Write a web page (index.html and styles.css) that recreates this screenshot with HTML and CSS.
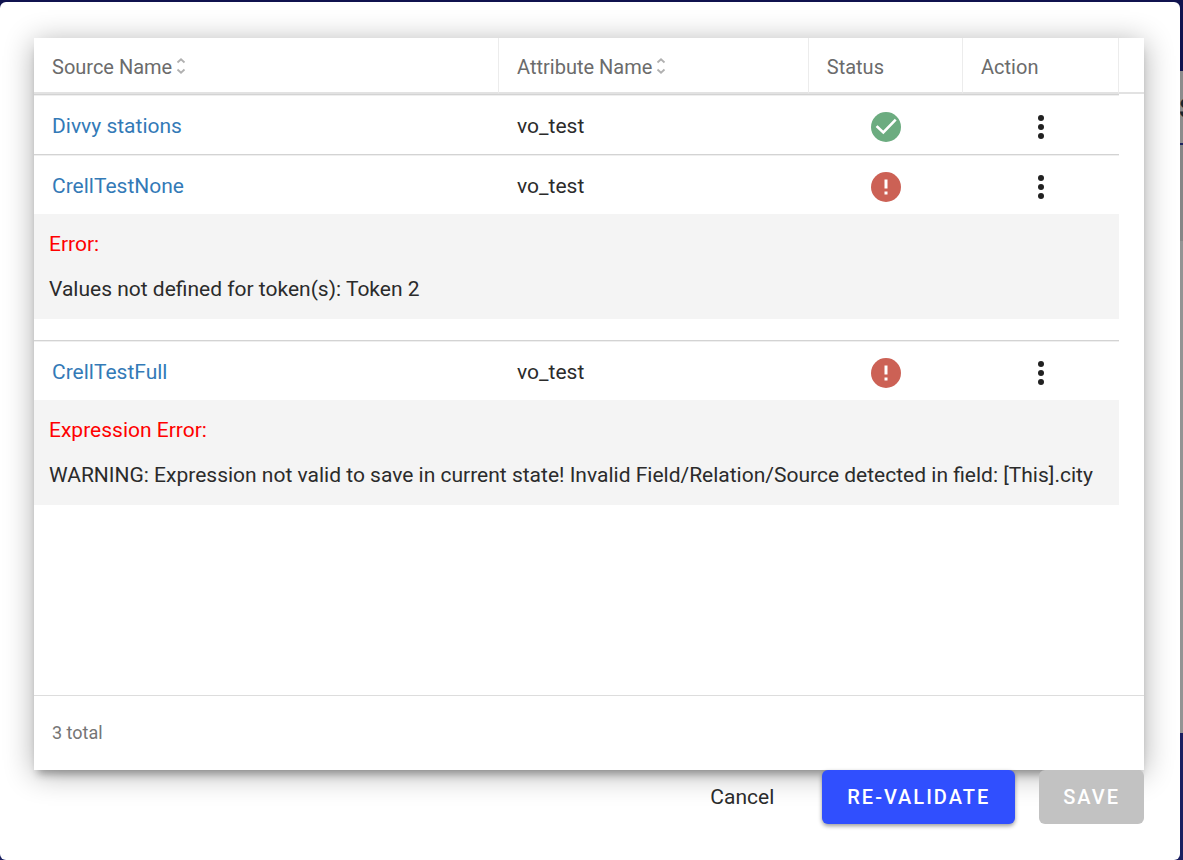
FILE: index.html
```html
<!DOCTYPE html>
<html lang="en">
<head>
<meta charset="utf-8">
<title>Validate sources</title>
<link rel="stylesheet" href="styles.css">
</head>
<body>
<svg class="sprite" aria-hidden="true">
  <symbol id="sort" viewBox="0 0 10 16"><path d="M1.500 4.500 5 1.300l3.500 3.200M1.500 11.500 5 14.700l3.500-3.200" fill="none" stroke="#b0b0b0" stroke-width="1.800"/></symbol>
  <symbol id="ok" viewBox="0 0 30 30"><circle cx="15" cy="15" r="15" fill="#6cac80"/><path d="M6.500 15 12.300 20.500 23.800 8.600" fill="none" stroke="#fff" stroke-width="2.600" stroke-linecap="square"/></symbol>
  <symbol id="bad" viewBox="0 0 30 30"><circle cx="15" cy="15" r="15" fill="#cc6155"/><path d="M13.500 7.500h3v9h-3zM13.500 19.500h3v3h-3z" fill="#fff"/></symbol>
  <symbol id="dots" viewBox="0 0 6 24"><g fill="#212121"><circle cx="3" cy="3" r="3"/><circle cx="3" cy="12" r="3"/><circle cx="3" cy="21" r="3"/></g></symbol>
</svg>
<div class="stage">
  <div class="backdrop" aria-hidden="true">
    <div class="backdrop-bar"></div>
    <div class="backdrop-title"><span>S</span></div>
    <div class="backdrop-tools"></div>
    <div class="backdrop-body"></div>
    <div class="backdrop-foot"></div>
  </div>
  <main class="dialog" role="dialog" aria-label="Source validation">
    <section class="card">
      <div class="card-body">
        <table class="grid">
          <colgroup><col class="c-source"><col class="c-attr"><col class="c-status"><col class="c-action"><col class="c-gutter"></colgroup>
          <thead>
            <tr>
              <th scope="col">Source Name<svg class="sort"><use href="#sort"/></svg></th>
              <th scope="col">Attribute Name<svg class="sort"><use href="#sort"/></svg></th>
              <th scope="col">Status</th>
              <th scope="col">Action</th>
              <td class="gutter"></td>
            </tr>
          </thead>
          <tbody>
            <tr class="row">
              <td><a href="#divvy">Divvy stations</a></td>
              <td>vo_test</td>
              <td class="center"><svg class="status" role="img" aria-label="Valid"><use href="#ok"/></svg></td>
              <td class="center"><button class="more" type="button" aria-label="Actions"><svg><use href="#dots"/></svg></button></td>
              <td class="gutter"></td>
            </tr>
            <tr class="row">
              <td><a href="#none">CrellTestNone</a></td>
              <td>vo_test</td>
              <td class="center"><svg class="status" role="img" aria-label="Invalid"><use href="#bad"/></svg></td>
              <td class="center"><button class="more" type="button" aria-label="Actions"><svg><use href="#dots"/></svg></button></td>
              <td class="gutter"></td>
            </tr>
            <tr class="detail">
              <td colspan="4"><div class="message"><p class="error">Error:</p><p>Values not defined for token(s): Token 2</p></div></td>
              <td class="gutter"></td>
            </tr>
            <tr class="row">
              <td><a href="#full">CrellTestFull</a></td>
              <td>vo_test</td>
              <td class="center"><svg class="status" role="img" aria-label="Invalid"><use href="#bad"/></svg></td>
              <td class="center"><button class="more" type="button" aria-label="Actions"><svg><use href="#dots"/></svg></button></td>
              <td class="gutter"></td>
            </tr>
            <tr class="detail">
              <td colspan="4"><div class="message"><p class="error">Expression Error:</p><p>WARNING: Expression not valid to save in current state! Invalid Field/Relation/Source detected in field: [This].city</p></div></td>
              <td class="gutter"></td>
            </tr>
          </tbody>
        </table>
      </div>
      <footer class="card-foot">3 total</footer>
    </section>
    <div class="actions">
      <button class="btn cancel" type="button">Cancel</button>
      <button class="btn primary" type="button">RE-VALIDATE</button>
      <button class="btn save" type="button" disabled>SAVE</button>
    </div>
  </main>
</div>
</body>
</html>
```
FILE: styles.css
```css
* { box-sizing: border-box; }
body {
  margin: 0;
  background: #10134f;
  color: #2b2b2b;
  font-family: Roboto, "Liberation Sans", sans-serif;
  font-size: 21px;
  line-height: 24px;
}
p { margin: 0; }
.sprite { display: none; }
.stage { display: grid; min-height: 100vh; }
.backdrop, .dialog { grid-area: 1 / 1; min-width: 0; }
.backdrop { display: flex; flex-direction: column; background: #949494; }
.backdrop-bar { height: 71px; background: #10134f; }
.backdrop-title {
  display: flex;
  height: 74px;
  padding-top: 24px;
  justify-content: flex-end;
  background: #8c8c8c;
  border-bottom: 2px solid #1c2460;
  color: #17242f;
  font-weight: 700;
}
.backdrop-title span { width: 4px; overflow: hidden; font-size: 28px; line-height: 28px; }
.backdrop-tools { height: 96px; background: #868686; }
.backdrop-body { flex: 1; border-top: 54px solid #949494; }
.backdrop-foot { height: 127px; background: #1a1f60; }
.dialog {
  display: flex;
  flex-direction: column;
  margin: 2px 3px 0 0;
  padding: 36px;
  padding-left: 34px;
  background: #fff;
  border-radius: 6px;
}
.card {
  display: flex;
  flex: 1;
  flex-direction: column;
  background: #fff;
  box-shadow: 0 8px 8px -4px rgba(0, 0, 0, .3), 0 4px 28px rgba(0, 0, 0, .32);
}
.card-body { flex: 1; }
.grid { width: 100%; table-layout: fixed; border-spacing: 0; }
.c-source { width: 41.900%; }
.c-attr { width: 27.900%; }
.c-status { width: 13.900%; }
.c-gutter { width: 25px; }
.grid td, .grid th { padding: 0 18px; text-align: left; font-weight: 400; }
.grid thead th, .grid thead td { height: 56px; border-bottom: 2px solid #e2e2e2; }
.grid th { color: #6b6b6b; border-right: 1px solid #ececec; padding-top: 4px; font-size: 20px; }
.grid .gutter { padding: 0; }
.sort { width: 10px; height: 16px; margin-left: 4px; }
.row td { height: 60px; padding-top: 2px; }
.row td:not(.gutter) { border-top: 1px solid #d3d3d3; box-shadow: inset 0 1px #efefef; }
.grid .center { text-align: center; padding-top: 4px; }
.grid a { color: #337ab7; text-decoration: none; }
.status { display: block; width: 30px; height: 30px; margin: 0 auto; }
.more { display: block; margin: 0 auto; padding: 3px 12px; border: 0; background: none; }
.more svg { display: block; width: 6px; height: 24px; }
.grid .detail td { padding: 0 0 21px; }
.message { display: grid; gap: 21px; padding: 18px 15px; background: #f4f4f4; }
.error { color: #f00; }
.card-foot { padding: 25px 18px; border-top: 1px solid #ddd; color: #757575; font-size: 18px; }
.actions { display: flex; justify-content: flex-end; gap: 24px; }
.btn {
  height: 54px;
  padding: 0 24px;
  border: 0;
  border-radius: 6px;
  font: inherit;
  color: #fff;
}
.cancel { background: none; color: #2b2b2b; }
.primary, .save { font-size: 20px; font-weight: 500; letter-spacing: 2px; }
.primary { padding: 0 25px; background: #304ffe; box-shadow: 0 2px 4px rgba(0, 0, 0, .4); }
.save { background: #c2c2c2; }
```
